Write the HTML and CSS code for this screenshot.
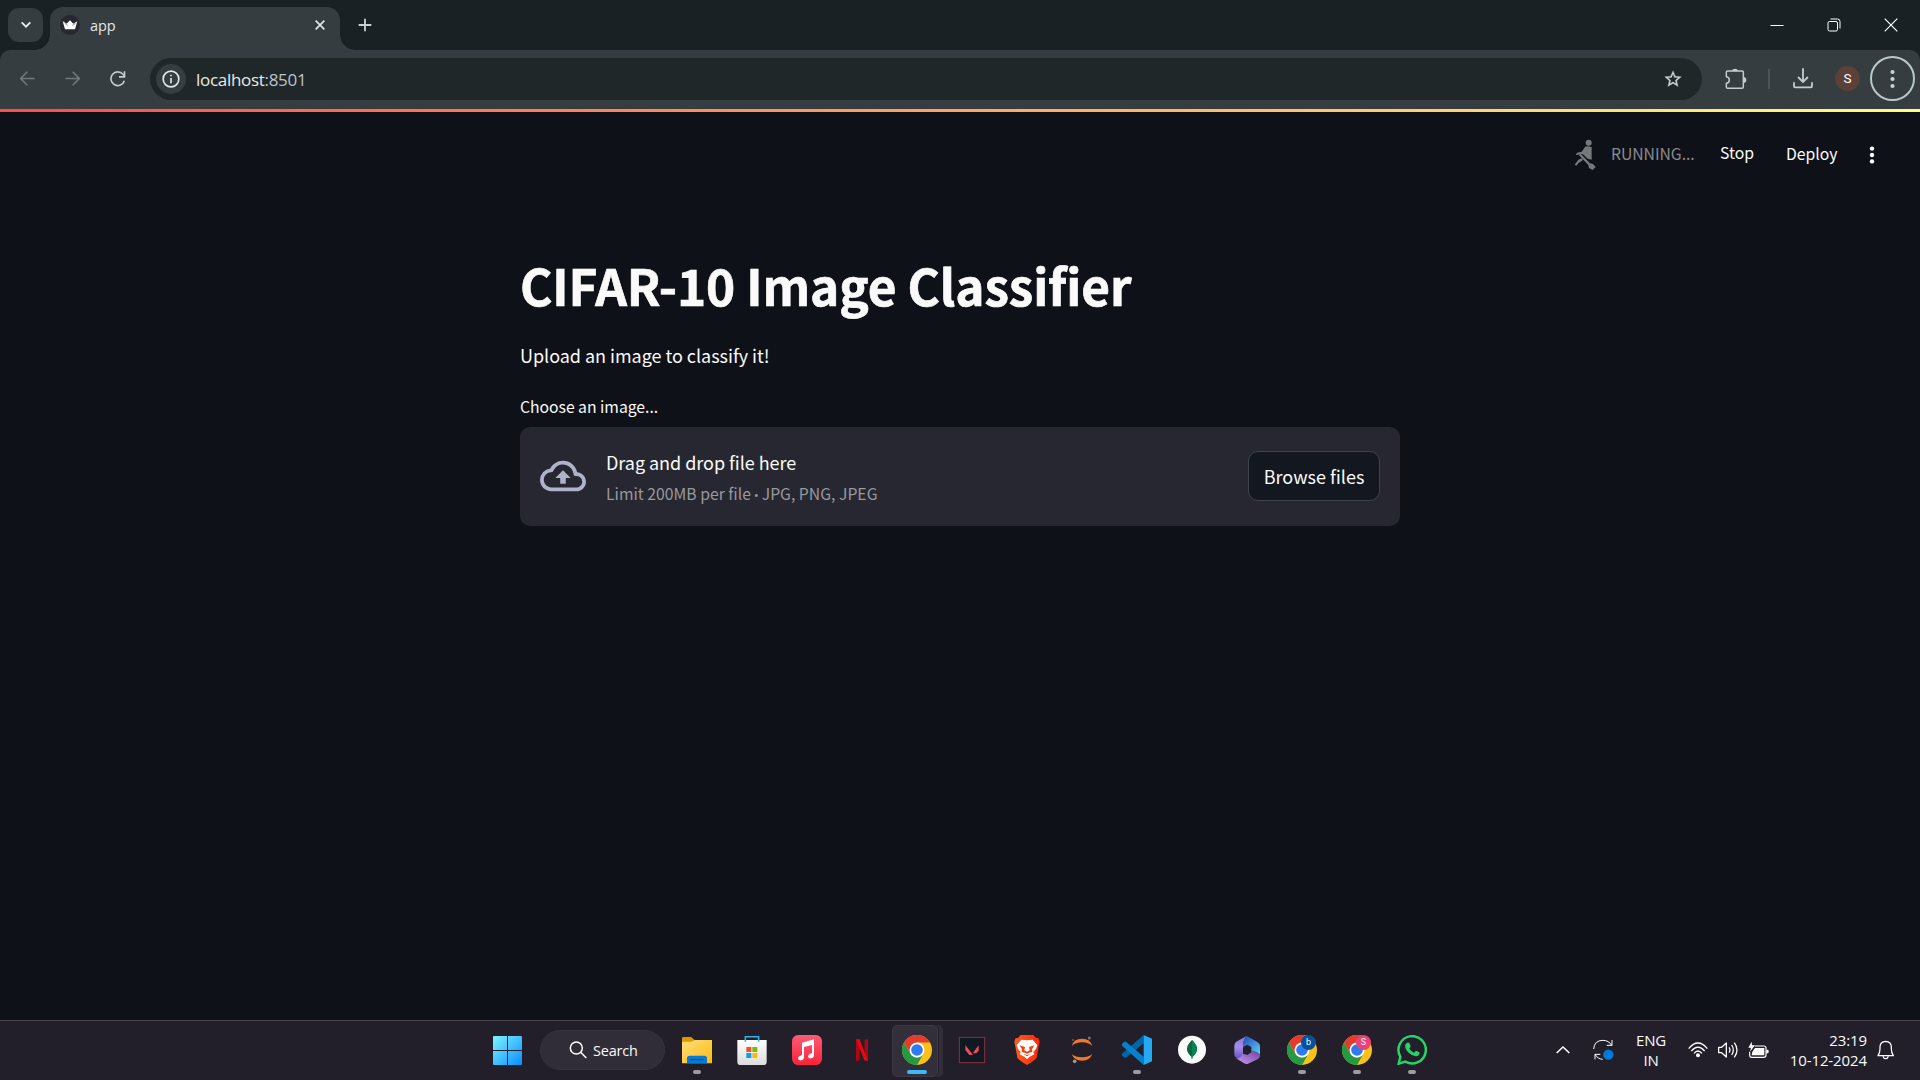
FILE: index.html
```
<!DOCTYPE html>
<html lang="en">
<head>
<meta charset="utf-8">
<title>app</title>
<link rel="stylesheet" href="styles.css">
</head>
<body>
<svg class="defs" width="0" height="0" aria-hidden="true">
  <defs>
    <linearGradient id="win" x1="0" y1="0" x2="1" y2="1"><stop offset="0" stop-color="#7df4ff"/><stop offset="1" stop-color="#0a8dff"/></linearGradient>
    <linearGradient id="folder" x1="0" y1="0" x2="1" y2="1"><stop offset="0" stop-color="#ffdf79"/><stop offset="1" stop-color="#fdb913"/></linearGradient>
    <linearGradient id="music" x1="0" y1="0" x2="0" y2="1"><stop offset="0" stop-color="#fb5c74"/><stop offset="1" stop-color="#fa233b"/></linearGradient>
    <linearGradient id="brave" x1="0" y1="0" x2="1" y2="0"><stop offset="0" stop-color="#ff5a1f"/><stop offset="1" stop-color="#f92a05"/></linearGradient>
    <linearGradient id="m1" x1="0" y1="0" x2="0" y2="1"><stop offset="0" stop-color="#7a7ae0"/><stop offset=".5" stop-color="#a98be8"/><stop offset="1" stop-color="#5a57c8"/></linearGradient>
    <linearGradient id="m2" x1="0" y1="0" x2="1" y2="1"><stop offset="0" stop-color="#2745b4"/><stop offset="1" stop-color="#55d4fb"/></linearGradient>
    <linearGradient id="m3" x1="0" y1="1" x2="1" y2="0"><stop offset="0" stop-color="#c99bf2"/><stop offset="1" stop-color="#71419f"/></linearGradient>
    <linearGradient id="store" x1="0" y1="0" x2="0" y2="1"><stop offset="0" stop-color="#ffffff"/><stop offset="1" stop-color="#dcdcdc"/></linearGradient>
    <symbol id="chrome" viewBox="0 0 90 90">
      <circle cx="45" cy="45" r="45" fill="#fbc116"/>
      <path d="M6 22.500A45 45 0 0 0 45 90L64.500 56.300A22.500 22.500 0 0 1 25.500 56.300Z" fill="#249a45"/>
      <path d="M6 22.500L25.500 56.300L45 45V22.500H84A45 45 0 0 0 6 22.500Z" fill="#e33b2e"/>
      <circle cx="45" cy="45" r="22.500" fill="#fff"/>
      <circle cx="45" cy="45" r="17.500" fill="#2f7af0"/>
    </symbol>
  </defs>
</svg>

<div class="tabstrip">
  <button class="tab-search"><svg width="12" height="8" viewBox="0 0 36 24"><path d="M5 4L18 17L31 4" class="ln" stroke-width="5.500" stroke="#e8eaed"/></svg></button>
  <div class="tab">
    <svg class="favicon" width="20" height="20" viewBox="0 0 60 60"><circle cx="30" cy="30" r="30" fill="#262730"/><path d="M8 19L20 26L30 16L40 26L52 19L45 43H15Z" fill="#fff"/><path d="M8 19L20 26L26 34L18 30ZM52 19L40 26L34 34L44 30Z" fill="#b5b5b9"/></svg>
    <span class="tab-title">app</span>
    <svg class="tab-close" width="12" height="12" viewBox="0 0 36 36"><path d="M5 5L31 31M31 5L5 31" class="ln" stroke-width="5" stroke="#e3e7e8"/></svg>
  </div>
  <button class="new-tab"><svg width="14" height="14" viewBox="0 0 42 42"><path d="M21 2V40M2 21H40" class="ln" stroke-width="5.500" stroke="#c8d0d3"/></svg></button>
  <div class="window-controls">
    <span><svg width="14" height="14" viewBox="0 0 14 14"><path d="M.5 7.500H13.500" class="ln" stroke="#fff"/></svg></span>
    <span><svg width="14" height="14" viewBox="0 0 14 14"><rect x="1" y="3.500" width="9.500" height="9.500" rx="1.500" class="ln" stroke="#fff"/><path d="M3.500 1H10.500Q13 1 13 3.500V10.500" class="ln" stroke="#fff"/></svg></span>
    <span><svg width="14" height="14" viewBox="0 0 14 14"><path d="M.7 .7L13.300 13.300M13.300 .7L.7 13.300" class="ln" stroke="#fff" stroke-width="1.200"/></svg></span>
  </div>
</div>

<div class="toolbar-bg">
<div class="toolbar">
  <span class="tool"><svg width="15" height="15" viewBox="0 0 45 45"><path d="M44 22.500H3M22 2L2 22.500L22 43" class="ln" stroke="#72797c" stroke-width="4.500"/></svg></span>
  <span class="tool"><svg width="15" height="15" viewBox="0 0 45 45"><path d="M1 22.500H42M23 2L43 22.500L23 43" class="ln" stroke="#72797c" stroke-width="4.500"/></svg></span>
  <span class="tool"><svg width="16" height="16" viewBox="0 0 48 48"><path d="M43 29A20.500 20.500 0 1 1 39 10L44 16" class="ln" stroke="#c3cbce" stroke-width="5"/><path d="M46 1V20H27V15H41V1Z" fill="#c3cbce"/></svg></span>
  <div class="omnibox">
    <span class="site-info"><svg width="18" height="18" viewBox="0 0 54 54"><circle cx="27" cy="27" r="23.500" class="ln" stroke="#e3e7e8" stroke-width="5"/><path d="M27 24V40M27 14V19" class="ln" stroke="#e3e7e8" stroke-width="5"/></svg></span>
    <span class="url">localhost<span class="port">:8501</span></span>
    <svg class="star" width="20" height="20" viewBox="0 0 24 24"><path d="M22 9.240l-7.190-.62L12 2 9.190 8.630 2 9.240l5.460 4.730L5.820 21 12 17.270 18.180 21l-1.630-7.030L22 9.240zM12 15.400l-3.760 2.270 1-4.280-3.320-2.880 4.380-.38L12 6.100l1.710 4.040 4.380.38-3.320 2.880 1 4.280L12 15.400z" fill="#c9d1d3" stroke="#c9d1d3" stroke-width=".3"/></svg>
  </div>
  <span class="tool ext"><svg width="22" height="22" viewBox="496 202 66 66"><path d="M500 228V215Q500 211 504 211H548Q551 211 551 215V259Q551 263 547 263H504Q500 263 500 259V248Q509 247 509 238Q509 229 500 228Z" class="ln" stroke="#c3cbce" stroke-width="4.500" stroke-linejoin="round"/><path d="M517 211Q518 204 526 204Q534 204 535 211ZM552 229Q560 230 560 238Q560 246 552 247Z" fill="#c3cbce"/></svg></span>
  <span class="divider"></span>
  <span class="tool"><svg width="20" height="21" viewBox="0 0 60 63"><path d="M30 1V40M15 27L30 42L45 27M3 43V54Q3 58 7 58H53Q57 58 57 54V43" class="ln" stroke="#c3cbce" stroke-width="5.500"/></svg></span>
  <span class="tool"><span class="avatar">S</span></span>
  <span class="tool ring"><svg width="5" height="20" viewBox="0 0 5 20"><g fill="#c9d1d3"><circle cx="2.500" cy="3" r="2.100"/><circle cx="2.500" cy="10" r="2.100"/><circle cx="2.500" cy="17" r="2.100"/></g></svg></span>
</div>
</div>

<main class="app">
  <div class="decoration"></div>
  <header class="app-header">
    <svg class="rower" width="24" height="32" viewBox="40 415 72 96"><g fill="#77787c"><circle cx="87" cy="426" r="9"/><path d="M96 439V477L84 474L69 460L48 464L52 456L66 453L76 439Q80 435 96 439Z"/><path d="M63 459L91 488L100 490L108 499L99 508L88 502L86 493L58 464Z"/><path d="M66 473L70 478L58 486L50 495L45 492L56 477Z"/></g></svg>
    <span class="running">RUNNING...</span>
    <span class="stop">Stop</span>
    <span class="deploy">Deploy</span>
    <svg width="6" height="18" viewBox="0 0 6 18"><g fill="#fafafa"><circle cx="3" cy="2.600" r="2.200"/><circle cx="3" cy="9" r="2.200"/><circle cx="3" cy="15.400" r="2.200"/></g></svg>
  </header>
  <section class="content">
    <h1>CIFAR-10 Image Classifier</h1>
    <p class="lead">Upload an image to classify it!</p>
    <p class="label">Choose an image...</p>
    <div class="dropzone">
      <svg class="cloud" width="46" height="46" viewBox="0 0 24 24"><path d="M19.350 10.040A7.490 7.490 0 0 0 12 4C9.110 4 6.600 5.640 5.350 8.040A5.994 5.994 0 0 0 0 14c0 3.310 2.690 6 6 6h13c2.760 0 5-2.240 5-5 0-2.640-2.050-4.780-4.650-4.960zM19 18H6c-2.210 0-4-1.790-4-4 0-2.050 1.530-3.760 3.560-3.970l1.070-.11.5-.95A5.469 5.469 0 0 1 12 6c2.620 0 4.880 1.860 5.390 4.430l.3 1.500 1.530.11A2.980 2.980 0 0 1 22 15c0 1.650-1.350 3-3 3zM8 13h2.550v3h2.900v-3H16l-4-4z" fill="#aeb3ca"/></svg>
      <div class="instructions">
        <span class="drag">Drag and drop file here</span>
        <span class="limit">Limit 200MB per file <span class="bullet">•</span> JPG, PNG, JPEG</span>
      </div>
      <button class="browse"><span>Browse files</span></button>
    </div>
  </section>
</main>

<footer class="taskbar">
  <div class="apps">
    <span class="task"><svg width="29" height="29" viewBox="0 0 29 29"><path d="M1 0H14V14H0V1Q0 0 1 0ZM15 0H28Q29 0 29 1V14H15ZM0 15H14V29H1Q0 29 0 28ZM15 15H29V28Q29 29 28 29H15Z" fill="url(#win)"/></svg></span>
    <div class="search"><svg width="18" height="18" viewBox="0 0 54 54"><circle cx="22" cy="21" r="18" class="ln" stroke="#fff" stroke-width="4.500"/><path d="M35 34L52 51" class="ln" stroke="#fff" stroke-width="4.500"/></svg><span>Search</span></div>
    <span class="task open"><svg width="30" height="30" viewBox="0 0 90 90"><path d="M0 10Q0 6 4 6H27L37 14V30H0Z" fill="#d99a00"/><path d="M0 20H28L38 15H90V85H0Z" fill="url(#folder)"/><path d="M15 85V70Q15 62 23 62H67Q75 62 75 70V85Z" fill="#0a79d2"/><path d="M25 74H65" stroke="#074f95" stroke-width="3"/></svg></span>
    <span class="task"><svg width="30" height="30" viewBox="0 0 90 90"><path d="M1 15H89V80Q89 90 79 90H11Q1 90 1 80Z" fill="url(#store)"/><path d="M25 20V5H65V20" class="ln" stroke="#27b5ea" stroke-width="4.500"/><path d="M28 36H43V51H28Z" fill="#f25022"/><path d="M46 36H61V51H46Z" fill="#7fba00"/><path d="M28 54H43V69H28Z" fill="#00a4ef"/><path d="M46 54H61V69H46Z" fill="#ffb900"/></svg></span>
    <span class="task"><svg width="30" height="30" viewBox="0 0 90 90"><rect width="90" height="90" rx="19" fill="url(#music)"/><path d="M30 23L66 13V60Q66 69 57 70Q48 71 48 64Q48 58 55 56L60 54V30L36 36V67Q36 75 27 76Q18 77 18 70Q18 64 25 62L30 60Z" fill="#fff"/></svg></span>
    <span class="task"><svg width="30" height="30" viewBox="0 0 90 90"><path d="M27 13H38V76L27 78ZM53 13H63V78L53 76Z" fill="#b1060f"/><path d="M27 13H38L63 78L52 76Z" fill="#e50914"/></svg></span>
    <span class="task active"><svg width="30" height="30"><use href="#chrome"/></svg></span>
    <span class="task"><svg width="30" height="30" viewBox="0 0 90 90"><rect x="7" y="7" width="76" height="76" fill="#0f1923" stroke="#8c2e3b" stroke-width="3"/><path d="M25 30L48 60H37L25 45ZM65 31V47L58 55H47Z" fill="#f14b59"/></svg></span>
    <span class="task"><svg width="30" height="30" viewBox="0 0 90 90"><path d="M26 0H64L72 9L79 9L83 20L81 29L74 68Q71 74 45 90Q19 74 16 68L9 29L7 20L11 9L18 9Z" fill="url(#brave)"/><path d="M28 14L45 16L62 14L76 30L72 42L64 51L67 58L52 66L45 73L38 66L23 58L26 51L18 42L14 30Z" fill="#fff"/><path d="M23 31L39 36L37 46L45 50L53 46L51 36L67 31L60 43L61 51L49 54L45 57L41 54L29 51L30 43ZM34 57L45 60L56 57L45 64Z" fill="#f5410f"/></svg></span>
    <span class="task"><svg width="30" height="30" viewBox="0 0 90 90"><path d="M14 33Q20 11 45 11Q70 11 76 33Q64 22 45 22Q26 22 14 33ZM14 57Q26 67 45 67Q64 67 76 57Q69 77 45 77Q21 77 14 57Z" fill="#f37726"/><circle cx="67" cy="9" r="4.500" fill="#76767c"/><circle cx="18" cy="15" r="3" fill="#616169"/><circle cx="23" cy="79" r="5.500" fill="#9a9a9e"/></svg></span>
    <span class="task open"><svg width="30" height="30" viewBox="0 0 90 90"><path d="M65 0V25L12 68L7 68L0 61V56Z" fill="#0065a9"/><path d="M0 32V27L7 20H12L65 65V90L0 32Z" fill="#087fca"/><path d="M65 0L90 11V79L65 90Z" fill="#24a9f2"/></svg></span>
    <span class="task"><svg width="30" height="30" viewBox="0 0 90 90"><circle cx="45" cy="44" r="42" fill="#fbfbfb"/><path d="M45 15Q74 43 47 65L46 72H44L43 65Q16 43 45 15Z" fill="#116149"/><path d="M45 15Q74 43 47 65L45 68Z" fill="#00864e"/></svg></span>
    <span class="task"><svg width="30" height="30" viewBox="0 0 90 90"><path d="M44 3L15 19Q7 23 7 31V59Q7 68 22 70L33 61V30Q33 18 44 3Z" fill="url(#m1)"/><path d="M44 3L75 20Q84 25 84 34V58L58 47V36L46 29L33 36Q32 14 44 3Z" fill="url(#m2)"/><path d="M84 48V63Q84 68 78 72L48 86Q43 88 35 84L12 70Q24 71 33 56L46 60L58 52V47Q72 46 84 58Z" fill="url(#m3)"/></svg></span>
    <span class="task open"><svg width="30" height="30"><use href="#chrome"/></svg><i class="badge b">b</i></span>
    <span class="task open"><svg width="30" height="30"><use href="#chrome"/></svg><i class="badge s">S</i></span>
    <span class="task open"><svg width="30" height="30" viewBox="0 0 90 90"><path d="M5 86L10 65A41 41 0 1 1 25 80Z" class="ln" stroke="#25d366" stroke-width="7.500"/><path d="M25 29Q31 19 37 24L41 34Q40 38 37 41Q43 51 51 53L57 47L67 52Q70 56 63 62Q52 68 36 54Q22 41 25 29Z" fill="#25d366"/></svg></span>
  </div>
  <div class="tray">
    <svg class="chev" width="14" height="8" viewBox="0 0 42 24"><path d="M2 21L21 3L40 21" class="ln" stroke="#fff" stroke-width="4.500"/></svg>
    <svg class="sync" width="21" height="22" viewBox="188 88 63 66"><path d="M190 118Q192 92 218 92Q235 92 244 107M245 91V107H229M194 149V134H210M194 134Q202 148 217 149" class="ln" stroke="#fff" stroke-width="3"/><circle cx="234" cy="135" r="15.500" fill="#0078d7"/></svg>
    <div class="lang"><span>ENG</span><span>IN</span></div>
    <svg class="wifi" width="20" height="16" viewBox="0 0 60 48"><path d="M2 20Q30 -14 58 20M10 27Q30 4 50 27M18 34Q30 20 42 34" class="ln" stroke="#fff" stroke-width="3.800"/><circle cx="30" cy="40" r="6" fill="#fff"/></svg>
    <svg class="volume" width="21" height="18" viewBox="0 0 63 54"><path d="M2 19H11L25 6V48L11 35H2ZM33 19Q39 27 33 35M41 12Q51 27 41 42M49 5Q65 27 49 49" class="ln" stroke="#fff" stroke-width="3.800" stroke-linejoin="round"/></svg>
    <svg class="battery" width="21" height="18" viewBox="652 88 63 54"><path d="M672 103H699Q706 103 706 109V131Q706 137 699 137H663Q657 137 657 129V120" class="ln" stroke="#fff" stroke-width="3.500"/><path d="M673 109H701V131H663L665 120ZM707 114H712Q714 114 714 119Q714 125 712 125H707ZM663 90L653 108H661L658 120L673 101H664Z" fill="#fff"/></svg>
    <div class="clock"><span>23:19</span><span>10-12-2024</span></div>
    <svg class="bell" width="18" height="20" viewBox="1039 91 54 60"><path d="M1042 138Q1048 128 1048 118V112Q1048 96 1065 95Q1082 96 1082 112V118Q1082 128 1088 138ZM1057 140Q1059 147 1065 147Q1071 147 1073 140" class="ln" stroke="#fff" stroke-width="3.800" stroke-linejoin="round"/></svg>
  </div>
</footer>
</body>
</html>
```
FILE: styles.css
```
* { box-sizing: border-box; }
html, body { margin: 0; height: 100%; }
body {
  width: 1920px;
  height: 1080px;
  overflow: hidden;
  display: flex;
  flex-direction: column;
  background: #0e1117;
  color: #fafafa;
  font-family: "Noto Sans CJK SC", sans-serif;
}
svg { display: block; flex: none; }
.defs { position: absolute; }
button { border: 0; padding: 0; background: none; color: inherit; font: inherit; }
.ln { fill: none; }

/* Browser tab strip */
.tabstrip {
  height: 50px;
  flex: none;
  display: flex;
  padding-left: 8px;
  background: #1a2124;
  font-family: "Open Sans", sans-serif;
}
.tab-search {
  width: 35px;
  height: 34px;
  margin: 8px 7px 0 0;
  border-radius: 11px;
  background: #353d40;
  display: flex;
  align-items: center;
  justify-content: center;
}
.tab {
  position: relative;
  width: 290px;
  height: 43px;
  margin-top: 7px;
  padding: 0 14px 7px 10px;
  border-radius: 13px 13px 0 0;
  background: #353d40;
  display: flex;
  align-items: center;
}
.tab::before, .tab::after {
  content: "";
  position: absolute;
  bottom: 0;
  width: 15px;
  height: 15px;
}
.tab::before { left: -15px; background: radial-gradient(circle at 0 0, transparent 14.500px, #353d40 15px); }
.tab::after { right: -15px; background: radial-gradient(circle at 100% 0, transparent 14.500px, #353d40 15px); }
.tab-title { margin: 1px 0 0 10px; font-size: 14.500px; line-height: 20px; color: #e3e7e8; letter-spacing: -.1px; }
.tab-close { margin-left: auto; }
.new-tab { margin: 18px 0 0 18px; height: 14px; }
.window-controls { margin-left: auto; padding-right: 1px; display: flex; }
.window-controls span { width: 57px; height: 49px; display: flex; align-items: center; justify-content: center; }

/* Browser toolbar */
.toolbar-bg { flex: none; background: #1a2124; }
.toolbar {
  height: 59px;
  padding: 0 5px 2px;
  display: flex;
  align-items: center;
  background: #353d40;
  border-radius: 10px 10px 0 0;
  font-family: "Open Sans", sans-serif;
}
.tool { width: 45px; height: 45px; flex: none; display: flex; align-items: center; justify-content: center; }
.omnibox {
  width: 1552px;
  height: 42px;
  margin: 1px 0 0 10px;
  padding: 0 19px 0 6px;
  border-radius: 21px;
  background: #202729;
  display: flex;
  align-items: center;
}
.site-info { width: 30px; height: 30px; border-radius: 50%; background: #353d40; display: flex; align-items: center; justify-content: center; }
.url { margin: 1px 0 0 10px; font-size: 17px; line-height: 24px; color: #e6eaeb; letter-spacing: -.3px; }
.port { color: #bcc4c7; }
.star { margin-left: auto; }
.ext { margin-left: 11px; }
.divider { width: 2px; height: 20px; margin: 0 10px; background: #4c5457; }
.avatar { width: 25px; height: 25px; border-radius: 50%; background: #5d4037; color: #fff; font: 13.500px/25px Roboto, sans-serif; text-align: center; }
.ring { border: 2px solid #b9c8cc; border-radius: 50%; }

/* Streamlit page */
.app { flex: 1; display: flex; flex-direction: column; align-items: center; }
.decoration { width: 100%; height: 3px; flex: none; background: linear-gradient(90deg, #ff4b4b, #fffd80); }
.app-header { align-self: flex-end; height: 84px; flex: none; display: flex; align-items: center; padding-right: 45px; font-size: 15.750px; line-height: 24px; }
.rower { margin-top: 1px; }
.running { margin-left: 14px; width: 84px; letter-spacing: -.05px; color: #898a8f; }
.stop { margin: -2px 0 0 25px; width: 35px; }
.deploy { margin-left: 31px; width: 51px; }
.app-header svg:last-child { margin: 1px 0 0 32px; }
.content { width: 880px; padding-top: 56px; }
h1, p { margin: 0; white-space: nowrap; }
h1 { font-size: 49.500px; line-height: 66px; font-weight: 700; letter-spacing: -.12px; -webkit-text-stroke: .7px #fafafa; }
.lead { margin-top: 21px; font-size: 18px; line-height: 32px; letter-spacing: -.03px; }
.label { margin-top: 23px; font-size: 15.750px; line-height: 26px; letter-spacing: -.03px; }
.dropzone { height: 99px; margin-top: 7px; padding: 0 20px; border-radius: 10px; background: #262730; display: flex; align-items: center; }
.cloud { margin-top: -1px; }
.instructions { margin: -1px 0 0 20px; display: flex; flex-direction: column; gap: 5px; white-space: nowrap; }
.drag { font-size: 18px; line-height: 30px; letter-spacing: -.04px; }
.limit { font-size: 15.750px; line-height: 24px; color: #98989e; }
.bullet { font-family: "Open Sans", sans-serif; font-size: 13.500px; line-height: 1; margin: 0 -.7px; }
.browse { margin: -1px 0 0 auto; width: 132px; height: 50px; border: 1px solid #41434b; border-radius: 10px; background: #131720; font-size: 18px; line-height: 46px; white-space: nowrap; }
.browse span { display: block; margin-top: -1px; }

/* Taskbar */
.taskbar {
  height: 60px;
  flex: none;
  display: flex;
  justify-content: space-between;
  padding-left: 480px;
  border-top: 1px solid #46444c;
  background: #221f2b;
  font-family: "Open Sans", sans-serif;
}
.apps { height: 58px; display: flex; align-items: center; }
.task { position: relative; width: 55px; height: 58px; display: flex; align-items: center; justify-content: center; }
.task svg { position: relative; }
.open::after, .active::after { content: ""; position: absolute; left: 23.500px; bottom: 5px; width: 8px; height: 4px; border-radius: 2px; background: #9d9ba1; }
.active::after { left: 18px; width: 20px; background: #3cb8ff; }
.active::before {
  content: "";
  position: absolute;
  left: 3px;
  top: 4px;
  width: 44px;
  height: 50px;
  border: 1px solid #3b3944;
  border-radius: 5px;
  background: #322f3b;
  box-shadow: 1px 0 #221f2b, 5px 0 #312e39;
}
.search { width: 125px; height: 40px; margin: 0 4px 0 5px; padding-left: 28px; border: 1px solid #35323e; border-radius: 20px; background: #302d39; display: flex; align-items: center; font-size: 14.500px; }
.search span { margin-left: 6px; letter-spacing: -.2px; }
.badge { position: absolute; left: 27px; top: 14px; width: 15px; height: 15px; border-radius: 50%; font: normal 9px/15px Roboto, sans-serif; text-align: center; }
.badge.b { background: #06519b; }
.badge.s { background: #ec407a; }
.tray { height: 57px; display: flex; align-items: center; padding-right: 25px; font-size: 15px; line-height: 20px; white-space: nowrap; }
.sync { margin-left: 23px; }
.lang { width: 40px; margin-left: 17px; display: flex; flex-direction: column; align-items: center; letter-spacing: -.2px; }
.wifi { margin-left: 17px; }
.volume { margin-left: 10px; }
.battery { margin-left: 9px; }
.clock { width: 98px; display: flex; flex-direction: column; align-items: flex-end; letter-spacing: -.1px; }
.bell { margin-left: 10px; }
```
